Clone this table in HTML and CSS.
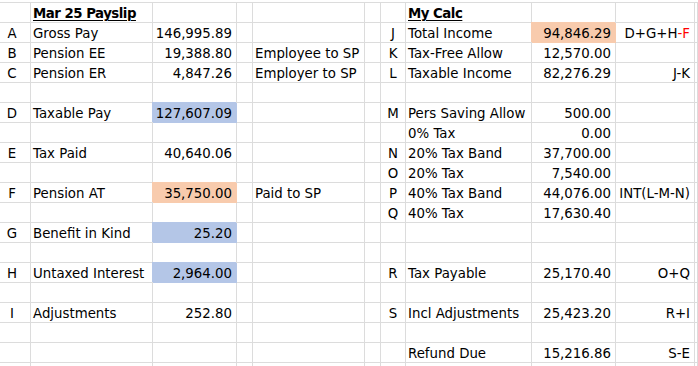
FILE: index.html
```html
<!DOCTYPE html>
<html lang="en">
<head>
<meta charset="utf-8">
<title>Mar 25 Payslip</title>
<link rel="stylesheet" href="styles.css">
</head>
<body>
<div class="sheet">
  <div class="row"><div class="c ltr"></div><div class="c txt"><span class="hd">Mar 25 Payslip</span></div><div class="c num"></div><div class="c"></div><div class="c txt"></div><div class="c"></div><div class="c key"></div><div class="c txt"><span class="hd">My Calc</span></div><div class="c num"></div><div class="c fx"></div><div class="c"></div></div>
  <div class="row"><div class="c ltr">A</div><div class="c txt">Gross Pay</div><div class="c num">146,995.89</div><div class="c"></div><div class="c txt"></div><div class="c"></div><div class="c key">J</div><div class="c txt">Total Income</div><div class="c num peach">94,846.29</div><div class="c fx">D+G+H<span class="red">-F</span></div><div class="c"></div></div>
  <div class="row"><div class="c ltr">B</div><div class="c txt">Pension EE</div><div class="c num">19,388.80</div><div class="c"></div><div class="c txt">Employee to SP</div><div class="c"></div><div class="c key">K</div><div class="c txt">Tax-Free Allow</div><div class="c num">12,570.00</div><div class="c fx"></div><div class="c"></div></div>
  <div class="row"><div class="c ltr">C</div><div class="c txt">Pension ER</div><div class="c num">4,847.26</div><div class="c"></div><div class="c txt">Employer to SP</div><div class="c"></div><div class="c key">L</div><div class="c txt">Taxable Income</div><div class="c num">82,276.29</div><div class="c fx">J-K</div><div class="c"></div></div>
  <div class="row"><div class="c ltr"></div><div class="c txt"></div><div class="c num"></div><div class="c"></div><div class="c txt"></div><div class="c"></div><div class="c key"></div><div class="c txt"></div><div class="c num"></div><div class="c fx"></div><div class="c"></div></div>
  <div class="row"><div class="c ltr">D</div><div class="c txt">Taxable Pay</div><div class="c num blue">127,607.09</div><div class="c"></div><div class="c txt"></div><div class="c"></div><div class="c key">M</div><div class="c txt">Pers Saving Allow</div><div class="c num">500.00</div><div class="c fx"></div><div class="c"></div></div>
  <div class="row"><div class="c ltr"></div><div class="c txt"></div><div class="c num"></div><div class="c"></div><div class="c txt"></div><div class="c"></div><div class="c key"></div><div class="c txt">0% Tax</div><div class="c num">0.00</div><div class="c fx"></div><div class="c"></div></div>
  <div class="row"><div class="c ltr">E</div><div class="c txt">Tax Paid</div><div class="c num">40,640.06</div><div class="c"></div><div class="c txt"></div><div class="c"></div><div class="c key">N</div><div class="c txt">20% Tax Band</div><div class="c num">37,700.00</div><div class="c fx"></div><div class="c"></div></div>
  <div class="row"><div class="c ltr"></div><div class="c txt"></div><div class="c num"></div><div class="c"></div><div class="c txt"></div><div class="c"></div><div class="c key">O</div><div class="c txt">20% Tax</div><div class="c num">7,540.00</div><div class="c fx"></div><div class="c"></div></div>
  <div class="row"><div class="c ltr">F</div><div class="c txt">Pension AT</div><div class="c num peach">35,750.00</div><div class="c"></div><div class="c txt">Paid to SP</div><div class="c"></div><div class="c key">P</div><div class="c txt">40% Tax Band</div><div class="c num">44,076.00</div><div class="c fx">INT(L-M-N)</div><div class="c"></div></div>
  <div class="row"><div class="c ltr"></div><div class="c txt"></div><div class="c num"></div><div class="c"></div><div class="c txt"></div><div class="c"></div><div class="c key">Q</div><div class="c txt">40% Tax</div><div class="c num">17,630.40</div><div class="c fx"></div><div class="c"></div></div>
  <div class="row"><div class="c ltr">G</div><div class="c txt">Benefit in Kind</div><div class="c num blue">25.20</div><div class="c"></div><div class="c txt"></div><div class="c"></div><div class="c key"></div><div class="c txt"></div><div class="c num"></div><div class="c fx"></div><div class="c"></div></div>
  <div class="row"><div class="c ltr"></div><div class="c txt"></div><div class="c num"></div><div class="c"></div><div class="c txt"></div><div class="c"></div><div class="c key"></div><div class="c txt"></div><div class="c num"></div><div class="c fx"></div><div class="c"></div></div>
  <div class="row"><div class="c ltr">H</div><div class="c txt">Untaxed Interest</div><div class="c num blue">2,964.00</div><div class="c"></div><div class="c txt"></div><div class="c"></div><div class="c key">R</div><div class="c txt">Tax Payable</div><div class="c num">25,170.40</div><div class="c fx">O+Q</div><div class="c"></div></div>
  <div class="row"><div class="c ltr"></div><div class="c txt"></div><div class="c num"></div><div class="c"></div><div class="c txt"></div><div class="c"></div><div class="c key"></div><div class="c txt"></div><div class="c num"></div><div class="c fx"></div><div class="c"></div></div>
  <div class="row"><div class="c ltr">I</div><div class="c txt">Adjustments</div><div class="c num">252.80</div><div class="c"></div><div class="c txt"></div><div class="c"></div><div class="c key">S</div><div class="c txt">Incl Adjustments</div><div class="c num">25,423.20</div><div class="c fx">R+I</div><div class="c"></div></div>
  <div class="row"><div class="c ltr"></div><div class="c txt"></div><div class="c num"></div><div class="c"></div><div class="c txt"></div><div class="c"></div><div class="c key"></div><div class="c txt"></div><div class="c num"></div><div class="c fx"></div><div class="c"></div></div>
  <div class="row"><div class="c ltr"></div><div class="c txt"></div><div class="c num"></div><div class="c"></div><div class="c txt"></div><div class="c"></div><div class="c key"></div><div class="c txt">Refund Due</div><div class="c num">15,216.86</div><div class="c fx">S-E</div><div class="c"></div></div>
  <div class="row"><div class="c ltr"></div><div class="c txt"></div><div class="c num"></div><div class="c"></div><div class="c txt"></div><div class="c"></div><div class="c key"></div><div class="c txt"></div><div class="c num"></div><div class="c fx"></div><div class="c"></div></div>
</div>
</body>
</html>
```

FILE: styles.css
```css
html, body {
  margin: 0;
  padding: 0;
  background: #ffffff;
  overflow: hidden;
}

body {
  width: 698px;
  height: 366px;
}

.sheet {
  margin-top: 2px;
  border-top: 1px solid #dcdcdc;
  font-family: "DejaVu Sans", Verdana, sans-serif;
  font-size: 13.33px;
  color: #000000;
}

.row {
  display: grid;
  grid-template-columns: 31px 122px 84px 16px 112px 16px 25px 126px 84px 79px 1fr;
  height: 20px;
}

.c {
  box-sizing: border-box;
  height: 20px;
  border-right: 1px solid #dcdcdc;
  border-bottom: 1px solid #dcdcdc;
  padding-top: 2px;
  line-height: 17px;
  white-space: nowrap;
  overflow: visible;
}

.ltr {
  text-align: center;
  padding-right: 6px;
}

.key {
  text-align: center;
}

.txt {
  padding-left: 2px;
}

.num {
  text-align: right;
  padding-right: 4px;
}

.fx {
  text-align: right;
  padding-right: 4px;
}

.hd {
  font-weight: bold;
  letter-spacing: -0.5px;
  text-decoration: underline;
  text-decoration-thickness: 1px;
  text-underline-offset: 2px;
}

.red {
  color: #ff0000;
}

.peach {
  background: #f8cbad;
  border-color: #f8cbad;
  box-shadow: -1px -1px 0 0 #f8cbad;
}

.blue {
  background: #b4c6e7;
  border-color: #b4c6e7;
  box-shadow: -1px -1px 0 0 #b4c6e7;
}
```
